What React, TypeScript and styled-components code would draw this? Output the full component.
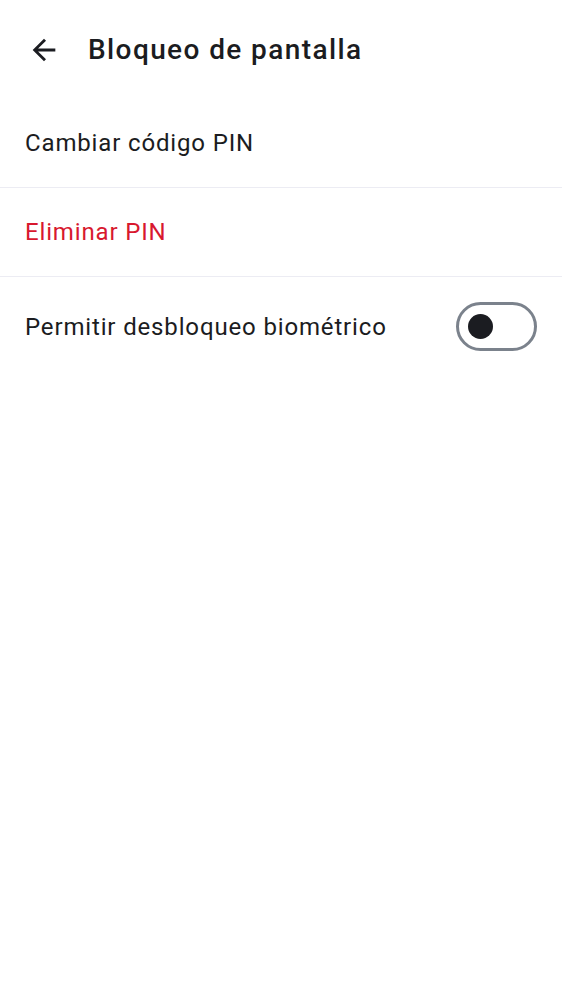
import React from "react";
import styled, { createGlobalStyle } from "styled-components";

const Global = createGlobalStyle`
  html, body { margin: 0; padding: 0; background: #ffffff; }
  body { font-family: Roboto, "Noto Sans", sans-serif; color: #1b1c21; }
`;

const Page = styled.div`
  width: 562px;
  min-height: 1000px;
  background: #ffffff;
  display: flex;
  flex-direction: column;
`;

const Header = styled.header`
  height: 99px;
  display: flex;
  align-items: center;
  padding: 0 0 0 26px;
  gap: 27px;
  box-sizing: border-box;
`;

const BackButton = styled.button`
  width: 35px;
  height: 35px;
  padding: 0;
  border: 0;
  background: transparent;
  display: flex;
  align-items: center;
  justify-content: center;
  color: #1b1c21;
`;

const Title = styled.h1`
  margin: 0;
  font-size: 28px;
  line-height: 32px;
  font-weight: 500;
  letter-spacing: 1.4px;
  color: #1b1c21;
`;

const List = styled.div`
  display: flex;
  flex-direction: column;
`;

const Row = styled.div<{ $divider?: boolean }>`
  display: flex;
  align-items: center;
  justify-content: space-between;
  height: 89px;
  padding: 0 25px;
  box-sizing: border-box;
  border-bottom: ${(p) => (p.$divider ? "1px solid #ececf3" : "none")};
`;

const ToggleRow = styled(Row)`
  height: auto;
  padding: 25px 25px;
`;

const Label = styled.span<{ $danger?: boolean }>`
  font-size: 24px;
  line-height: 30px;
  font-weight: 400;
  letter-spacing: 0.85px;
  color: ${(p) => (p.$danger ? "#d8182e" : "#1b1c21")};
`;

const Switch = styled.div`
  width: 81px;
  height: 49px;
  box-sizing: border-box;
  border: 3px solid #7b828c;
  border-radius: 25px;
  display: flex;
  align-items: center;
  padding-left: 9px;
`;

const Knob = styled.div`
  width: 25px;
  height: 25px;
  border-radius: 50%;
  background: #1b1c21;
`;

export default function App() {
  return (
    <Page>
      <Global />
      <Header>
        <BackButton aria-label="Volver">
          <svg width="34" height="34" viewBox="0 0 24 24" fill="#1b1c21">
            <path d="M20 11H7.83l5.59-5.59L12 4l-8 8 8 8 1.41-1.41L7.83 13H20v-2z" />
          </svg>
        </BackButton>
        <Title>Bloqueo de pantalla</Title>
      </Header>
      <List>
        <Row $divider>
          <Label>Cambiar código PIN</Label>
        </Row>
        <Row $divider>
          <Label $danger>Eliminar PIN</Label>
        </Row>
        <ToggleRow>
          <Label>Permitir desbloqueo biométrico</Label>
          <Switch>
            <Knob />
          </Switch>
        </ToggleRow>
      </List>
    </Page>
  );
}
